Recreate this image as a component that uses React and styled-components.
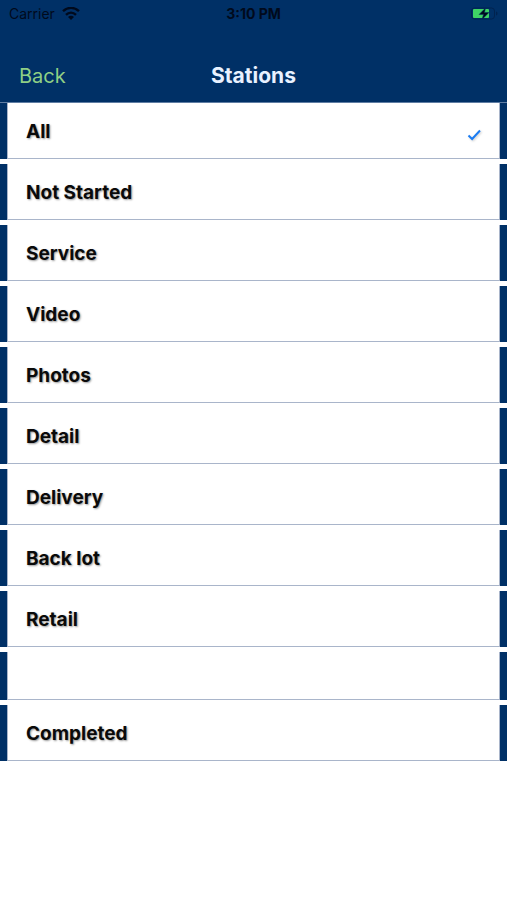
import React, { useState } from "react";
import styled, { createGlobalStyle } from "styled-components";

const GlobalStyle = createGlobalStyle`
  * {
    box-sizing: border-box;
  }

  body {
    margin: 0;
    background: #fff;
    font-family: Inter, "Liberation Sans", sans-serif;
  }

  button {
    margin: 0;
    border: 0;
    font-family: inherit;
    cursor: pointer;
  }
`;

const Header = styled.header`
  background: #003066;
  border-bottom: 1px solid #5f7da3;
`;

const StatusBar = styled.div`
  display: grid;
  grid-template-columns: 1fr auto 1fr;
  align-items: center;
  height: 28px;
  padding: 0 9px;
  color: #000a1c;
  font-size: 14px;
  line-height: 20px;
`;

const Carrier = styled.div`
  display: flex;
  align-items: center;
  gap: 7px;
`;

const Time = styled.time`
  font-weight: 700;
`;

const BatteryIcon = styled.svg`
  justify-self: end;
`;

const NavBar = styled.nav`
  display: grid;
  grid-template-columns: 1fr auto 1fr;
  align-items: center;
  height: 74px;
  padding: 22px 19px 0;
`;

const BackButton = styled.button`
  justify-self: start;
  padding: 0;
  background: none;
  color: #8fcf85;
  font-size: 20px;
  line-height: 24px;
`;

const Title = styled.h1`
  margin: 0;
  color: #e8f1ff;
  font-size: 21px;
  font-weight: 700;
  line-height: 24px;
`;

const List = styled.ul`
  display: flex;
  flex-direction: column;
  gap: 5px;
  margin: 0;
  padding: 0;
  list-style: none;
`;

const Row = styled.li`
  padding: 0 7px;
  background: #003066;
`;

const StationButton = styled.button`
  display: flex;
  align-items: center;
  justify-content: space-between;
  width: 100%;
  height: ${({ $empty }) => ($empty ? "48px" : "56px")};
  padding: 2px 18px 0;
  background: #fff;
  border: solid #a9b5ca;
  border-width: 0 1px 1px;
  color: #0a0a0a;
  font-size: 19px;
  font-weight: 700;
  line-height: 24px;
  text-align: left;
  text-shadow: 1px 1px 2px rgba(0, 0, 0, 0.4);
`;

const CheckIcon = styled.svg`
  margin-top: 6px;
  filter: drop-shadow(1px 1px 1px rgba(0, 0, 0, 0.2));
`;

const stations = [
  "All",
  "Not Started",
  "Service",
  "Video",
  "Photos",
  "Detail",
  "Delivery",
  "Back lot",
  "Retail",
  "",
  "Completed",
];

const Wifi = () => (
  <svg width='18' height='14' viewBox='0 0 18 14' aria-hidden='true'>
    <g fill='none' stroke='currentColor' strokeWidth='2.4'>
      <path d='M1 4.200C5.600 -.2 12.400 -.2 17 4.200' />
      <path d='M4 7.800c2.900-2.900 7.100-2.900 10 0' />
    </g>
    <path d='M9 13L6 10c1.700-1.600 4.300-1.600 6 0z' fill='currentColor' />
  </svg>
);

const Battery = () => (
  <BatteryIcon width='28' height='14' viewBox='0 0 28 14' aria-hidden='true'>
    <rect x='1.5' y='1' width='23' height='11' rx='3' fill='none' stroke='#00234f' />
    <path d='M26 4.500v4c1-.4 1.500-1.100 1.500-2s-.5-1.600-1.500-2z' fill='#00234f' />
    <rect x='3' y='2' width='16' height='9' rx='1' fill='#3fd465' />
    <path
      d='M15.500 1L9 7.500h4.500L12 12.500l7-7h-4.500z'
      fill='#000a1c'
      stroke='#003066'
      strokeWidth='.5'
    />
  </BatteryIcon>
);

const Station = ({ name, selected, onSelect }) => (
  <Row>
    <StationButton
      type='button'
      $empty={!name}
      aria-label={name || "Unnamed station"}
      aria-pressed={selected}
      onClick={onSelect}
    >
      <span>{name}</span>
      {selected && (
        <CheckIcon width='14' height='12' viewBox='0 0 14 12' aria-hidden='true'>
          <path d='M1.500 6.500l3.600 3.500L13 1.500' fill='none' stroke='#1b7cf2' strokeWidth='2' />
        </CheckIcon>
      )}
    </StationButton>
  </Row>
);

const App = () => {
  const [selected, setSelected] = useState("All");

  return (
    <>
      <GlobalStyle />
      <Header>
        <StatusBar>
          <Carrier>
            Carrier
            <Wifi />
          </Carrier>
          <Time>3:10 PM</Time>
          <Battery />
        </StatusBar>
        <NavBar>
          <BackButton type='button'>Back</BackButton>
          <Title>Stations</Title>
        </NavBar>
      </Header>
      <main>
        <List>
          {stations.map((name) => (
            <Station
              key={name}
              name={name}
              selected={name === selected}
              onSelect={() => setSelected(name)}
            />
          ))}
        </List>
      </main>
    </>
  );
};

export default App;
